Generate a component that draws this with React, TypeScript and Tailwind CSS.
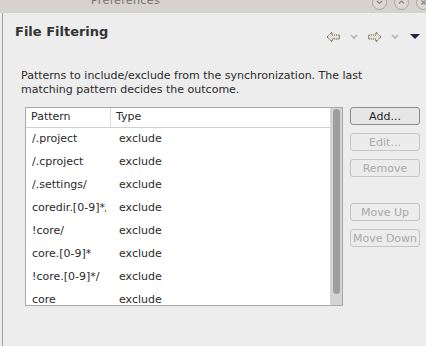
import React from "react";

const rows: [string, string][] = [
  ["/.project", "exclude"],
  ["/.cproject", "exclude"],
  ["/.settings/", "exclude"],
  ["coredir.[0-9]*/", "exclude"],
  ["!core/", "exclude"],
  ["core.[0-9]*", "exclude"],
  ["!core.[0-9]*/", "exclude"],
  ["core", "exclude"],
];

function Arrow({ dir }: { dir: "left" | "right" }) {
  const d =
    dir === "left"
      ? "M1 6 L6 1 L6 4 L13.5 4 L13.5 8 L6 8 L6 11 Z"
      : "M14 6 L9 1 L9 4 L1.5 4 L1.5 8 L9 8 L9 11 Z";
  return (
    <svg width="15" height="12" viewBox="0 0 15 12">
      <defs>
        <pattern id={`chk-${dir}`} width="2" height="2" patternUnits="userSpaceOnUse">
          <rect width="2" height="2" fill="#ffffff" />
          <rect width="1" height="1" fill="#cfc8bb" />
          <rect x="1" y="1" width="1" height="1" fill="#cfc8bb" />
        </pattern>
      </defs>
      <path d={d} fill={`url(#chk-${dir})`} stroke="#6e5a36" strokeWidth="1" strokeLinejoin="round" strokeDasharray="1.2 0.8" />
    </svg>
  );
}

function Chev() {
  return (
    <svg width="8" height="6" viewBox="0 0 8 6">
      <path d="M1 1 L4 4 L7 1" fill="none" stroke="#b4b4b4" strokeWidth="1.6" />
    </svg>
  );
}

function Btn({ label, enabled }: { label: string; enabled?: boolean }) {
  return (
    <div
      className={`h-[18px] w-[70px] rounded-[3px] border flex items-center justify-center text-[11px] leading-none ${
        enabled
          ? "border-[#8c8c8c] bg-[#e6e6e6] text-[#1e1e1e]"
          : "border-[#c4c4c4] bg-[#ececec] text-[#a9a9a9]"
      }`}
    >
      {label}
    </div>
  );
}

function WinBtn({ left, kind }: { left: string; kind: "down" | "up" | "x" }) {
  return (
    <div className={`absolute ${left} top-[-5px] w-[15px] h-[15px] rounded-full border border-[#a8a49f] bg-[#dcd8d3] flex items-center justify-center`}>
      <svg width="7" height="7" viewBox="0 0 7 7">
        {kind === "down" && <path d="M1 2 L3.5 4.5 L6 2" fill="none" stroke="#8a8680" strokeWidth="1.2" />}
        {kind === "up" && <path d="M1 4.5 L3.5 2 L6 4.5" fill="none" stroke="#8a8680" strokeWidth="1.2" />}
        {kind === "x" && <path d="M1.5 1.5 L5.5 5.5 M5.5 1.5 L1.5 5.5" fill="none" stroke="#8a8680" strokeWidth="1.2" />}
      </svg>
    </div>
  );
}

export default function App() {
  return (
    <div
      className="w-[426px] h-[346px] bg-[#ededed] overflow-hidden flex flex-col"
      style={{ fontFamily: '"DejaVu Sans", sans-serif' }}
    >
      {/* title bar */}
      <div className="h-[13px] bg-[#d6d2cd] relative shrink-0 overflow-hidden">
        <div className="absolute left-[91px] top-[-6px] text-[11px] text-[#77736e] tracking-[0.4px] leading-[14px]">Preferences</div>
        <WinBtn left="left-[372px]" kind="down" />
        <WinBtn left="left-[394px]" kind="up" />
        <WinBtn left="left-[416px]" kind="x" />
      </div>
      <div className="flex-1 flex">
        <div className="w-[2px] shrink-0" />
        <div className="w-[1px] bg-[#a3a3a3] shrink-0" />
        <div className="flex-1 flex flex-col">
          {/* header */}
          <div className="flex items-start h-[43px]">
            <div className="pl-[12px] pt-[12px] text-[13px] font-bold text-[#333333] leading-none">File Filtering</div>
            <div className="ml-auto flex items-center pt-[18px] pr-[6px]">
              <Arrow dir="left" />
              <div className="w-[9px]" />
              <Chev />
              <div className="w-[9px]" />
              <Arrow dir="right" />
              <div className="w-[9px]" />
              <Chev />
              <div className="w-[11px]" />
              <svg width="10" height="6" viewBox="0 0 10 6">
                <path d="M0 0 L10 0 L5 5 Z" fill="#2c1a4a" />
              </svg>
            </div>
          </div>
          <div className="pl-[18px] pt-[13px] text-[11px] leading-[14px] text-[#2a2a2a]">
            Patterns to include/exclude from the synchronization. The last
            <br />
            matching pattern decides the outcome.
          </div>
          <div className="flex pl-[22px] pt-[10px] gap-[7px]">
            <div className="w-[318px] h-[199px] border border-[#a8a8a8] border-r-0 bg-white flex overflow-hidden">
              <div className="flex-1 flex flex-col overflow-hidden">
                <div className="h-[20px] flex items-center border-b border-[#d0d0d0] text-[11px] text-[#2a2a2a] shrink-0">
                  <div className="w-[85px] pl-[5px] border-r border-[#d8d8d8] h-full flex items-center">Pattern</div>
                  <div className="pl-[5px]">Type</div>
                </div>
                {rows.map(([p, t]) => (
                  <div key={p} className="h-[23px] flex items-center text-[11px] text-[#2a2a2a] shrink-0">
                    <div className="w-[80px] pl-[6px] whitespace-nowrap overflow-hidden">{p}</div>
                    <div className="pl-[13px]">{t}</div>
                  </div>
                ))}
              </div>
              <div className="w-[13px] bg-[#d4d4d4] border-r border-[#a8a8a8] flex justify-center pt-[1px] shrink-0">
                <div className="w-[7px] h-[185px] rounded-full bg-[#9e9e9e]" />
              </div>
            </div>
            <div className="flex flex-col">
              <Btn label="Add..." enabled />
              <div className="h-[8px]" />
              <Btn label="Edit..." />
              <div className="h-[8px]" />
              <Btn label="Remove" />
              <div className="h-[26px]" />
              <Btn label="Move Up" />
              <div className="h-[8px]" />
              <Btn label="Move Down" />
            </div>
          </div>
        </div>
      </div>
    </div>
  );
}
